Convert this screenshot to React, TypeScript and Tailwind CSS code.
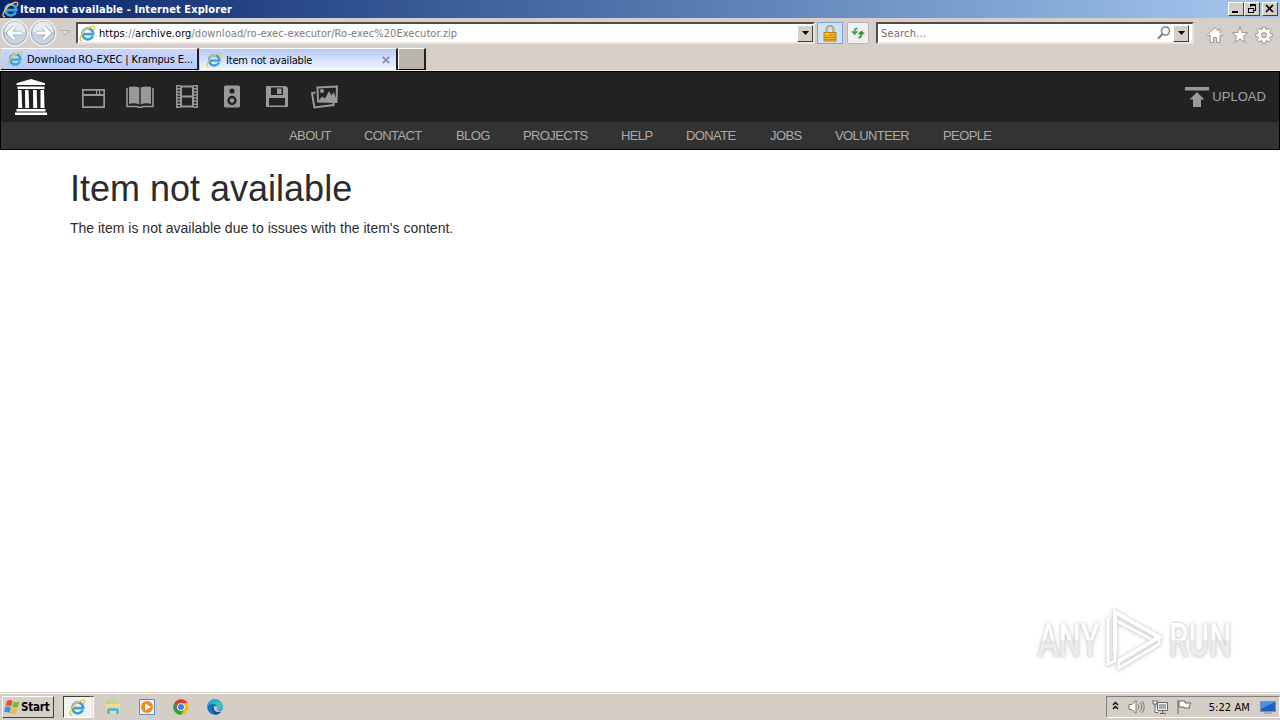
import type { ReactNode } from "react";

function IeIcon({ size = 17 }: { size?: number }) {
  return (
    <svg width={size} height={size} viewBox="0 0 18 18" fill="none" className="shrink-0">
      <path d="M14.600 11.800A5.800 5.800 0 1 1 15 8.400L15 9.700H5" stroke="#3ba3dc" strokeWidth="2.800" />
      <path d="M3.800 9.200A5.600 5.600 0 0 1 11 3.800" stroke="#8fd8f7" strokeWidth="1.400" />
      <path d="M3.200 16.600C-.6 17.200 1 11.500 5.600 6.600 10.500 1.600 16 .2 16.600 2.400 16.900 3.400 16.300 4.600 15.500 5.800" stroke="#edc545" strokeWidth="1.500" />
    </svg>
  );
}

function NavCircle({ flip = false }: { flip?: boolean }) {
  return (
    <svg width="28" height="28" viewBox="0 0 28 28" className={flip ? "-scale-x-100" : ""}>
      <circle cx="14" cy="14" r="13.500" fill="#eceff3" />
      <circle cx="14" cy="14" r="11.500" fill="#c9d3df" stroke="#98a3b1" />
      <path d="M3.500 13A10.500 10.500 0 0 1 24.500 13Q14 15 3.500 13Z" fill="#e6ebf2" />
      <path d="M13.500 8 7.500 14l6 6M8.500 14h12" stroke="#98a7b8" strokeWidth="4.500" fill="none" />
      <path d="M13.500 8 7.500 14l6 6M8.500 14h12" stroke="#fff" strokeWidth="3" fill="none" />
    </svg>
  );
}

function DropButton() {
  return (
    <div className="flex h-[17px] w-4 items-center justify-center border border-t-white border-l-white border-r-[#404040] border-b-[#404040] bg-[#d4d0c8]">
      <svg width="7" height="4" viewBox="0 0 7 4"><path d="M0 0h7L3.500 4Z" fill="#000" /></svg>
    </div>
  );
}

function WinButton({ children }: { children: ReactNode }) {
  return (
    <div className="h-[14px] w-4 border border-t-white border-l-white border-r-[#404040] border-b-[#404040] bg-[#d4d0c8]">
      <svg width="14" height="12" viewBox="0 0 14 12" fill="none" stroke="#000" shapeRendering="crispEdges">{children}</svg>
    </div>
  );
}

function TitleBar() {
  return (
    <div className="flex h-[18px] items-center bg-linear-to-r from-[#0a246a] to-[#a6caf0] pr-[2px] pl-[2px]">
      <IeIcon />
      <span className="mt-[2px] ml-px text-[11px] font-bold tracking-[0.1px] whitespace-nowrap text-white">Item not available - Internet Explorer</span>
      <div className="ml-auto flex">
        <WinButton><path d="M3 9h6" strokeWidth="2" /></WinButton>
        <WinButton>
          <path d="M5 2h6M5 1.500h6M5.500 2v2M10.500 2v5M9 7.500h2M3 5h6M3.500 5v5M8.500 5v5M3 9.500h6" />
        </WinButton>
        <div className="ml-[2px]">
          <WinButton><path d="m3 2 7 7m0-7-7 7" strokeWidth="1.700" shapeRendering="auto" /></WinButton>
        </div>
      </div>
    </div>
  );
}

function AddressRow() {
  return (
    <div className="flex h-[30px] items-center">
      <div className="ml-[1px] flex w-[75px] items-center">
        <NavCircle />
        <NavCircle flip />
        <svg width="10" height="6" viewBox="0 0 10 6" className="ml-[3px]"><path d="M.5.500h9L5 5Z" fill="#dedad6" stroke="#b4b0ac" /></svg>
      </div>
      <div className="flex h-[22px] w-[739px] items-center border-2 border-t-[#504c48] border-l-[#504c48] border-r-[#e8e4e0] border-b-[#e8e4e0] bg-white pl-px">
        <IeIcon />
        <span className="mt-[2px] ml-[3px] text-[11px] tracking-[0.07px] whitespace-nowrap text-[#7c7c7c]">
          <span className="text-black">https</span>://<span className="text-black">archive.org</span>/download/ro-exec-executor/Ro-exec%20Executor.zip
        </span>
        <div className="ml-auto"><DropButton /></div>
      </div>
      <div className="ml-[2px] flex h-[22px] w-[26px] items-center justify-center border border-[#74a5e2] bg-[#cfe2fb]">
        <svg width="14" height="17" viewBox="0 0 14 17" fill="none">
          <path d="M3.500 8V4.500a3.500 3.500 0 0 1 7 0V8" stroke="#9b8a5b" strokeWidth="2" />
          <path d="M3.500 8V4.500a3.500 3.500 0 0 1 7 0V8" stroke="#eee0ab" strokeWidth=".6" />
          <path d="M1 7.500h12v8.500H1Z" fill="#efb51e" stroke="#b98012" />
          <path d="M1.500 10h11M1.500 12.500h11M1.500 14.500h11" stroke="#c98a14" />
          <path d="M2 9h4" stroke="#ffe680" />
        </svg>
      </div>
      <div className="ml-1 flex h-[22px] w-[22px] items-center justify-center rounded-xs border border-[#b5b5bb] bg-[#f0f0ee]">
        <svg width="14" height="12" viewBox="0 0 16 14" fill="none">
          <path d="M7.500 1.500Q4 1.500 4 5" stroke="#4aa852" strokeWidth="2" />
          <path d="M0 5h8.500L4 9.500Z" fill="#3ba145" />
          <path d="M8.500 12.500Q12 12.500 12 8" stroke="#2f9138" strokeWidth="2" />
          <path d="M7.500 8.500H16L12 4Z" fill="#2a8f33" />
        </svg>
      </div>
      <div className="ml-[7px] flex h-[22px] w-[318px] items-center border-2 border-t-[#504c48] border-l-[#504c48] border-r-[#e8e4e0] border-b-[#e8e4e0] bg-white pr-[3px] pl-[3px]">
        <span className="mt-[2px] text-[11px] tracking-[0.2px] text-[#6d6d6d]">Search...</span>
        <svg width="14" height="14" viewBox="0 0 14 14" className="mr-[2px] ml-auto" fill="none" stroke="#858585">
          <circle cx="8.500" cy="5" r="4" strokeWidth="1.600" /><path d="M5.500 8 1 12.800" strokeWidth="2.200" />
        </svg>
        <DropButton />
      </div>
      <div className="ml-[12px] flex items-center gap-[7px] pt-[4px]">
        <svg width="18" height="18" viewBox="0 0 18 18" fill="#fff" stroke="#969696" strokeLinejoin="round">
          <path d="M9 1.500 1.500 9l1 1.200L4 9v7.500h3.500v-5h3v5H14V9l1.500 1.200 1-1.200-2.500-2.500V3h-2v1.500Z" />
        </svg>
        <svg width="18" height="18" viewBox="0 0 18 18" fill="#fff" stroke="#969696" strokeLinejoin="round">
          <path d="m9 1 2.200 5.600 5.800.2-4.600 3.700 1.700 5.900L9 13l-5.100 3.400 1.700-5.900L1 6.800l5.800-.2Z" />
        </svg>
        <svg width="18" height="18" viewBox="0 0 18 18" fill="#fff" stroke="#969696" strokeLinejoin="round" className="-ml-px">
          <path d="m7.500 1 3 0 .4 2.200 1.200.5L14 2.300 16 4.400l-1.400 1.800.5 1.200 2.100.3v2.900l-2.100.3-.5 1.200 1.400 1.800L14 15.900l-1.900-1.300-1.200.5-.4 2.200h-3l-.4-2.200-1.200-.5L4 15.900l-2-2 1.400-1.800-.5-1.200L.8 10.600V7.700l2.100-.3.500-1.200L2 4.400l2-2.100 1.900 1.400 1.200-.5Z" />
          <circle cx="9" cy="9.200" r="2.600" fill="#d4d0c8" />
        </svg>
      </div>
    </div>
  );
}

function TabRow() {
  return (
    <div className="flex h-[23px] items-start border-b border-[#ece8e4] pl-px text-[11px] text-black">
      <div className="flex h-[22px] w-[198px] items-center border-t border-r-2 border-b border-t-white border-r-[#202020] border-b-black bg-linear-to-b from-[#cbd6fa] to-[#b9c9f7] pl-[6px]">
        <IeIcon size={16} />
        <span className="mt-[3px] ml-1 tracking-[-0.11px] whitespace-nowrap">Download RO-EXEC | Krampus E...</span>
      </div>
      <div className="ml-px flex h-[22px] w-[198px] items-center border-t border-r-2 border-t-white border-r-[#202020] bg-linear-to-b from-[#b7c9f7] to-[#f3f7ff] pl-[6px]">
        <IeIcon size={16} />
        <span className="mt-[3px] ml-1 tracking-[-0.2px] whitespace-nowrap">Item not available</span>
        <svg width="8" height="8" viewBox="0 0 8 8" className="mr-[6px] ml-auto"><path d="m.8.8 6.400 6.400m0-6.400L.8 7.200" stroke="#8990a0" strokeWidth="1.800" /></svg>
      </div>
      <div className="h-[22px] w-7 border-t border-r-2 border-b border-l border-t-white border-r-[#202020] border-b-black border-l-white bg-[#bab3a9]" />
    </div>
  );
}

function ArchiveLogo() {
  return (
    <svg width="32" height="36" viewBox="0 0 32 36" fill="#fff">
      <path d="M16 0 30 4.200V6H1.500V4.200ZM2.500 7.500h27V10h-27ZM1.500 30h29v2.500h-29ZM0 33.500h32V36H0Z" />
      <path d="M3 11h3.500l.7 18h-4ZM10 11h3.500l.7 18h-4ZM18 11h3.700l.5 18h-4ZM25.500 11H29l.5 18h-4Z" />
    </svg>
  );
}

const MEDIA_ICONS = [
  {
    id: "web",
    width: 23,
    className: "mr-[21px]",
    art: <path fillRule="evenodd" d="M0 4h23v19H0ZM1.700 5.700V9H14V5.700Zm13.500 0V9H17V5.700Zm3 0V9h3.200V5.700ZM1.700 11v10.300h19.600V11Z" />,
  },
  {
    id: "texts",
    width: 28,
    className: "mr-[22px]",
    art: (
      <>
        <path d="M3 2q5-1.200 10.300.5v17Q8 17.500 3 19ZM25 2q-5-1.200-10.300.5v17Q20 17.500 25 19Z" />
        <path d="M1 3v18.500h9.500q1.500 0 2 .8h3q.5-.8 2-.8H27V3" fill="none" stroke="#999" strokeWidth="1.600" />
      </>
    ),
  },
  {
    id: "video",
    width: 22,
    className: "mr-[26px]",
    art: (
      <>
        <path d="M5 1.500h12v20H5ZM5 11.500h12" fill="none" stroke="#999" strokeWidth="2" />
        <path d="M.8 0v23M21.200 0v23" stroke="#999" strokeWidth="1.500" />
        <path d="M2.700 0v23M19.300 0v23" stroke="#999" strokeWidth="3.500" strokeDasharray="1.500 1.570" />
      </>
    ),
  },
  {
    id: "audio",
    width: 16,
    className: "mr-[26px]",
    art: (
      <>
        <path d="M1.500.500h13q1.500 0 1.500 1.500v19q0 1.500-1.500 1.500h-13Q0 22.500 0 21V2Q0 .5 1.500.500Z" />
        <circle cx="8" cy="6" r="2.600" fill="#222" />
        <circle cx="8" cy="15.500" r="3.500" fill="#999" stroke="#222" strokeWidth="2.300" />
      </>
    ),
  },
  {
    id: "software",
    width: 22,
    className: "mr-[23px]",
    art: <path fillRule="evenodd" d="M0 1h20l2 2v19H0ZM5 2.500V10h12V2.500Zm6 1h4.500V9H11ZM3 13v7.500h16V13Z" />,
  },
  {
    id: "images",
    width: 27,
    className: "",
    art: (
      <>
        <path d="M4.500 7.500 1 8l2.400 14.500L22.500 20v-2" fill="none" stroke="#999" strokeWidth="2" />
        <path d="m6.500 2.500 19.500-1L25.500 17 7 16.500Z" fill="none" stroke="#999" strokeWidth="2" />
        <circle cx="11" cy="6" r="2" />
        <path d="m7.500 16 3.500-4.500 3 2L18 6l2.500 4.500L22.500 7 25 13v3Z" />
      </>
    ),
  },
];

const LINKS = [
  { label: "ABOUT", className: "w-[75px]" },
  { label: "CONTACT", className: "w-[92px]" },
  { label: "BLOG", className: "w-[67px]" },
  { label: "PROJECTS", className: "w-[98px]" },
  { label: "HELP", className: "w-[65px]" },
  { label: "DONATE", className: "w-[84px]" },
  { label: "JOBS", className: "w-[65px]" },
  { label: "VOLUNTEER", className: "w-[108px]" },
  { label: "PEOPLE", className: "w-[60px]" },
];

function SiteNav() {
  return (
    <header className="border-t border-r border-b border-l border-black font-['Liberation_Sans',Arial,sans-serif] text-[#999]">
      <div className="flex h-[50px] items-center bg-[#222] pr-[13px] pl-[14px]">
        <ArchiveLogo />
        <div className="ml-[35px] flex">
          {MEDIA_ICONS.map((icon) => (
            <svg key={icon.id} width={icon.width} height="24" viewBox={`0 0 ${icon.width} 24`} fill="#999" className={icon.className}>
              {icon.art}
            </svg>
          ))}
        </div>
        <svg width="24" height="20" viewBox="0 0 24 20" fill="#999" className="ml-auto">
          <path d="M0 0h24v3.500H0ZM12 5l7.500 7.500H16V20H8v-7.500H4.500Z" />
        </svg>
        <span className="ml-[3px] text-[13px] tracking-[0.05px] text-[#a5a5a5]">UPLOAD</span>
      </div>
      <nav className="flex h-[27px] items-center bg-[#333] pt-px pl-[288px] text-[13px] tracking-[-0.6px] text-[#aaa]">
        {LINKS.map((link) => (
          <a key={link.label} className={link.className}>{link.label}</a>
        ))}
      </nav>
    </header>
  );
}

function WatermarkWord({ text }: { text: string }) {
  return (
    <div className="w-[64px]">
      <span className="block w-[100px] origin-left scale-x-[0.68] bg-linear-to-b from-white from-50% to-[#ececec] to-50% bg-clip-text font-medium text-transparent">
        {text}
      </span>
    </div>
  );
}

function Watermark() {
  return (
    <div className="absolute right-[47px] bottom-[20px] flex items-center font-[Roboto,sans-serif] text-[46px] leading-none [filter:drop-shadow(0_0_1px_#c4c4c4)_drop-shadow(0_1px_2px_#ddd)]">
      <WatermarkWord text="ANY" />
      <svg width="60" height="64" viewBox="0 0 60 64" fill="none" stroke="#fff" strokeWidth="4" className="mr-[4px] ml-[3px]">
        <path d="M10 44V4l44 25-40 24" />
        <path d="M3 10v46l7-3V4M10 12l36 19M14 60l40-24v-7L14 53Z" strokeWidth="3" />
      </svg>
      <WatermarkWord text="RUN" />
    </div>
  );
}

function Taskbar() {
  return (
    <footer className="flex h-7 items-center border-t border-[#d4d0c8] bg-[#d5cec7] pt-px pl-[2px] text-[11px] text-black shadow-[inset_0_1px_0_#fff]">
      <div className="flex h-[22px] w-[52px] items-center border border-t-white border-l-white border-r-[#404040] border-b-[#404040] bg-[#d4d0c8] pl-px">
        <svg width="16" height="16" viewBox="0 0 16 16">
          <path d="M3 2q3-2 5.500 0L7.300 7.300Q5 6 1.500 7Z" fill="#e6532a" />
          <path d="M9.500 2.500Q12.500 4 15.500 2.500L14 8q-3 1.200-5.700-.2Z" fill="#7cb83e" />
          <path d="M1.200 8Q4.500 6.800 7 8.500L5.700 14Q3 12.500 0 13.300Z" fill="#4290d8" />
          <path d="M8 9q3 1.400 5.700.2l-1.500 5.300Q9.500 16 6.700 14.500Z" fill="#f4bf2d" />
        </svg>
        <span className="mt-[2px] ml-px text-[11.500px] font-bold tracking-[-0.2px]">Start</span>
      </div>
      <div className="ml-[9px] flex h-[22px] w-[28px] items-center justify-center border border-t-[#404040] border-l-[#404040] border-r-white border-b-white bg-[#f3f1ef]">
        <IeIcon />
      </div>
      <div className="h-[22px] w-[3px] border-t border-r border-t-[#404040] border-r-white bg-[#e8e4df]" />
      <svg width="16" height="16" viewBox="0 0 16 16" className="ml-[11px]">
        <path d="M1 2h5l1 1.500h7V14H1Z" fill="#e9c65a" />
        <path d="M3 1h8v5H3Z" fill="#b4dc96" />
        <path d="M1 5h14v9.500H1Z" fill="#f0dc8c" />
        <path d="M2 15v-4q0-2 2-2h8q2 0 2 2v4h-3v-3H5v3Z" fill="#57b8df" />
      </svg>
      <svg width="16" height="16" viewBox="0 0 16 16" className="ml-[18px]">
        <path d="M.5.500h15v15H.500Z" fill="#e6f1fb" stroke="#4d94cf" />
        <circle cx="8" cy="8" r="6" fill="#f2891c" />
        <path d="m6 4.500 6 3.500-6 3.500Z" fill="#fff" />
      </svg>
      <svg width="16" height="16" viewBox="0 0 16 16" className="ml-[18px]">
        <circle cx="8" cy="8" r="7.800" fill="#eabf20" />
        <path d="M1.250 4.100A7.800 7.800 0 0 1 14.750 4.100H8A3.900 3.900 0 0 0 4.600 9.900Z" fill="#dc3c2e" />
        <path d="M1.250 4.100A7.800 7.800 0 0 0 8 15.800L11.400 9.950A3.900 3.900 0 0 1 4.600 9.950Z" fill="#289b4c" />
        <circle cx="8" cy="8" r="3.800" fill="#fff" />
        <circle cx="8" cy="8" r="3" fill="#397fe5" />
      </svg>
      <svg width="16" height="16" viewBox="0 0 16 16" className="ml-[18px]">
        <circle cx="8" cy="8" r="7.800" fill="#1674c5" />
        <path d="M.3 7A7.800 7.800 0 0 1 15.800 8q0 3-3.800 3-3 0-2.500-1.800Q11 6 7.500 5 3 4 .3 7Z" fill="#3cc4b1" />
        <path d="M.3 7Q1 .5 8 .2 12 .5 14 3 8 2 .3 7Z" fill="#2fa6dd" />
        <path d="M6.500 7Q3 11 8 15.500 11.500 16 14.500 12.500 8 14 6.500 10Z" fill="#15529f" />
        <path d="M7 7.500q3-1.500 3 1-.8 1.500 0 2.500 2 1.300 5.500 0l-1 1.500q-6 1.500-7.500-2.500Z" fill="#d5cec7" />
      </svg>
      <div className="ml-auto flex h-[22px] w-[174px] items-center border border-t-[#808080] border-l-[#808080] border-r-white border-b-white pr-[3px] pl-[5px]">
        <svg width="7" height="9" viewBox="0 0 7 9" fill="none" stroke="#000" strokeWidth="1.400" className="mb-[3px]"><path d="m1 4 2.500-2.500L6 4M1 8l2.500-2.500L6 8" /></svg>
        <svg width="17" height="16" viewBox="0 0 17 16" className="ml-[9px]" fill="#fff" stroke="#777">
          <path d="M1 5.500h3L8 1.500v13l-4-4H1Z" />
          <path d="M10 5.500q2 2.500 0 5M12 3.500q3.500 4.500 0 9M14 2q4.500 6 0 12" fill="none" />
        </svg>
        <svg width="17" height="16" viewBox="0 0 17 16" className="ml-[7px]" fill="none" stroke="#666">
          <path d="M5.500 3.500h10v8h-10ZM8 14.500h6M10.500 11.500v3" fill="#f4f4f4" />
          <path d="M7 5h7v5H7Z" fill="#aaa" stroke="none" />
          <path d="M1 1v4h4V1M3 5v8.500h3M2 1v2M4 1v2" fill="#fff" />
        </svg>
        <svg width="17" height="16" viewBox="0 0 17 16" className="ml-[7px]" fill="#fff" stroke="#666">
          <path d="M2 1v14M3 2h6v2h6l-2 3 1 2H8V8H3Z" />
        </svg>
        <span className="mt-[2px] ml-auto tracking-[0.1px] whitespace-nowrap">5:22 AM</span>
        <svg width="16" height="14" viewBox="0 0 16 14" className="ml-[10px]">
          <path d="M.5 1.500h15v10H.500Z" fill="#1e5ebc" stroke="#7394bd" />
          <path d="M1 2h14L1 9Z" fill="#4c91df" /><path d="M4 13h8" stroke="#6e8db2" />
        </svg>
      </div>
    </footer>
  );
}

export default function App() {
  return (
    <div className="flex h-[720px] w-[1280px] flex-col overflow-hidden bg-[#d6cfc9] font-['DejaVu_Sans_Condensed','DejaVu_Sans',Tahoma,sans-serif] [font-stretch:condensed]">
      <TitleBar />
      <AddressRow />
      <TabRow />
      <SiteNav />
      <main className="relative flex-1 bg-white pt-[19px] pl-[70px] font-['Liberation_Sans',Arial,sans-serif] text-[#2c2c2c] [font-stretch:normal]">
        <h1 className="text-[36px] leading-10">Item not available</h1>
        <p className="mt-[9px] text-sm leading-5">The item is not available due to issues with the item's content.</p>
        <Watermark />
      </main>
      <Taskbar />
    </div>
  );
}
